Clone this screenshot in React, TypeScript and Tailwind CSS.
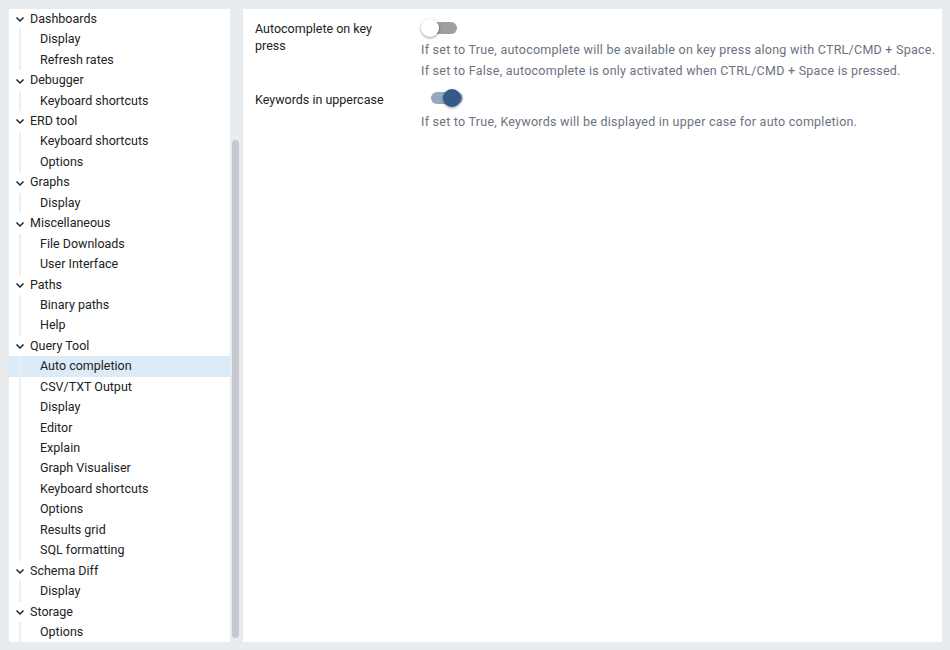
import React from "react";

const tree: [string, string[]][] = [
  ["Dashboards", ["Display", "Refresh rates"]],
  ["Debugger", ["Keyboard shortcuts"]],
  ["ERD tool", ["Keyboard shortcuts", "Options"]],
  ["Graphs", ["Display"]],
  ["Miscellaneous", ["File Downloads", "User Interface"]],
  ["Paths", ["Binary paths", "Help"]],
  ["Query Tool", ["Auto completion", "CSV/TXT Output", "Display", "Editor", "Explain", "Graph Visualiser", "Keyboard shortcuts", "Options", "Results grid", "SQL formatting"]],
  ["Schema Diff", ["Display"]],
  ["Storage", ["Options"]],
];

const Chevron = () => (
  <svg width="12" height="12" viewBox="0 0 24 24" fill="none" stroke="#222" strokeWidth="3" className="mr-[4px]">
    <path d="M5 9l7 7 7-7" />
  </svg>
);

export default function App() {
  return (
    <div className="w-[950px] h-[650px] bg-[#e9ecef] flex pt-[9px] pb-[8px] pl-[9px] pr-[8px] text-[12.5px] text-[#222]" style={{ fontFamily: "Roboto, 'Liberation Sans', sans-serif" }}>
      <div className="w-[221px] bg-white overflow-hidden pt-[0px]">
        {tree.map(([g, items]) => (
          <div key={g}>
            <div className="h-[20.45px] flex items-center pl-[5px]"><Chevron />{g}</div>
            {items.map((it, i) => (
              <div key={i} className={`h-[20.45px] flex items-center ${g === "Query Tool" && i === 0 ? "bg-[#dcebf8]" : ""}`}>
                <div className="ml-[10px] w-[2px] h-full bg-[#eceef0]" />
                <div className="pl-[19px]">{it}</div>
              </div>
            ))}
          </div>
        ))}
      </div>
      <div className="w-[13px] flex pl-[2px] pt-[131px]">
        <div className="w-[7px] h-[498px] rounded-full bg-[#c6cacf]" />
      </div>
      <div className="flex-1 bg-white pl-[12px] pt-[11px] text-[#222]">
        <div className="flex">
          <div className="w-[166px] pr-[40px] leading-[17px]">Autocomplete on key press</div>
          <div>
            <div className="h-[16px] flex items-center">
              <div className="relative w-[32px] h-[12px] rounded-full bg-[#9e9e9e] ml-[4px]">
                <div className="absolute -left-[4px] -top-[3px] w-[18px] h-[18px] rounded-full bg-white shadow-[0_1px_3px_rgba(0,0,0,0.4)]" />
              </div>
            </div>
            <div className="text-[#6b7280] leading-[20.5px] mt-[4px] tracking-[0.25px]">
              <div>If set to True, autocomplete will be available on key press along with CTRL/CMD + Space.</div>
              <div>If set to False, autocomplete is only activated when CTRL/CMD + Space is pressed.</div>
            </div>
          </div>
        </div>
        <div className="flex mt-[9px]">
          <div className="w-[166px] leading-[17px] pt-[1px]">Keywords in uppercase</div>
          <div>
            <div className="h-[16px] flex items-center">
              <div className="relative w-[32px] h-[12px] rounded-full bg-[#94a8c0] ml-[10px]">
                <div className="absolute left-[12px] -top-[3px] w-[18px] h-[18px] rounded-full bg-[#345a8a] shadow-[0_1px_3px_rgba(0,0,0,0.4)]" />
              </div>
            </div>
            <div className="text-[#6b7280] leading-[20.5px] mt-[6px] tracking-[0.25px]">If set to True, Keywords will be displayed in upper case for auto completion.</div>
          </div>
        </div>
      </div>
    </div>
  );
}
